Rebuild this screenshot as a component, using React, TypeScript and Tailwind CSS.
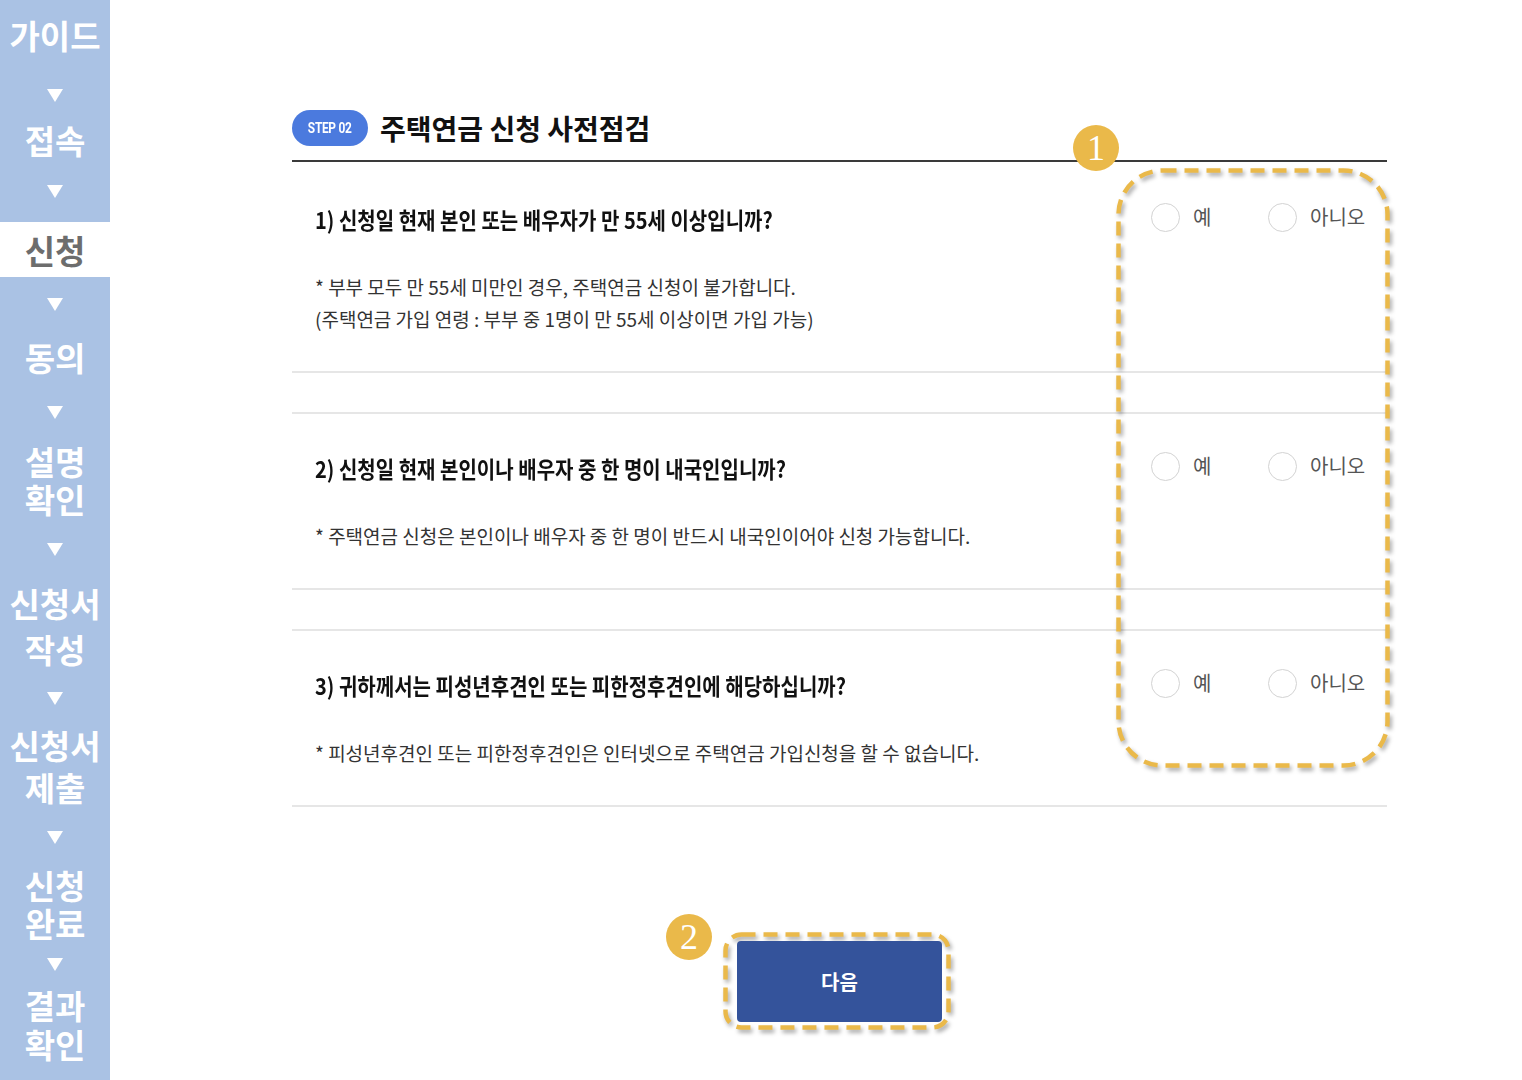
import React from 'react';

const kr = "font-['Noto_Sans_CJK_KR',sans-serif]";

const Arrow = ({ h }: { h: string }) => (
  <div className={`flex items-center justify-center ${h}`}>
    <svg width="16" height="13" viewBox="0 0 16 13">
      <path d="M0 0H16L8 13Z" fill="#ffffff" />
    </svg>
  </div>
);

const Label = ({ lines, h, lh, active }: { lines: string[]; h: string; lh: string; active?: boolean }) => (
  <div
    className={`flex flex-col items-center justify-center text-[33px] font-bold ${h} ${
      active ? 'bg-white text-[#6d6d6d]' : 'text-white'
    }`}
  >
    {lines.map((l) => (
      <span key={l} className={`block overflow-visible ${lh}`}>
        {l}
      </span>
    ))}
  </div>
);

const Sidebar = () => (
  <div className={`flex w-[110px] shrink-0 flex-col bg-[#aac2e4] ${kr}`}>
    <Label lines={['가이드']} h="h-[70px]" lh="h-[38px] leading-[38px]" />
    <Arrow h="h-[50px]" />
    <Label lines={['접속']} h="h-[40px]" lh="h-[38px] leading-[38px]" />
    <Arrow h="h-[62px]" />
    <Label lines={['신청']} h="h-[55px]" lh="h-[38px] leading-[38px]" active />
    <Arrow h="h-[55px]" />
    <Label lines={['동의']} h="h-[50px]" lh="h-[38px] leading-[38px]" />
    <Arrow h="h-[60px]" />
    <Label lines={['설명', '확인']} h="h-[76px]" lh="h-[38px] leading-[38px]" />
    <Arrow h="h-[62px]" />
    <Label lines={['신청서', '작성']} h="h-[92px]" lh="h-[46px] leading-[46px]" />
    <Arrow h="h-[52px]" />
    <Label lines={['신청서', '제출']} h="h-[84px]" lh="h-[42px] leading-[42px]" />
    <Arrow h="h-[58px]" />
    <Label lines={['신청', '완료']} h="h-[76px]" lh="h-[38px] leading-[38px]" />
    <Arrow h="h-[44px]" />
    <Label lines={['결과', '확인']} h="h-[78px]" lh="h-[39px] leading-[39px]" />
    <div className="h-[16px]" />
  </div>
);

const Radio = ({ label, w }: { label: string; w?: string }) => (
  <div className={`flex items-center ${w ?? ''}`}>
    <span className="h-[29px] w-[29px] rounded-full border-[1.5px] border-[#d3d3d3] bg-white" />
    <span className="ml-[13px] text-[20px] leading-[28px] text-[#555555]">{label}</span>
  </div>
);

type Item = { q: string; notes: string[]; pt: string; first?: boolean };

const items: Item[] = [
  {
    q: '1) 신청일 현재 본인 또는 배우자가 만 55세 이상입니까?',
    notes: ['* 부부 모두 만 55세 미만인 경우, 주택연금 신청이 불가합니다.', '(주택연금 가입 연령 : 부부 중 1명이 만 55세 이상이면 가입 가능)'],
    pt: 'pt-[43px]',
    first: true,
  },
  {
    q: '2) 신청일 현재 본인이나 배우자 중 한 명이 내국인입니까?',
    notes: ['* 주택연금 신청은 본인이나 배우자 중 한 명이 반드시 내국인이어야 신청 가능합니다.'],
    pt: 'pt-[40px]',
  },
  {
    q: '3) 귀하께서는 피성년후견인 또는 피한정후견인에 해당하십니까?',
    notes: ['* 피성년후견인 또는 피한정후견인은 인터넷으로 주택연금 가입신청을 할 수 없습니다.'],
    pt: 'pt-[40px]',
  },
];

const Badge = ({ n, className }: { n: string; className: string }) => (
  <div
    className={`absolute flex h-[46px] w-[46px] items-center justify-center rounded-full bg-[#eab94a] font-['Liberation_Serif',serif] text-[36px] leading-none text-white ${className}`}
  >
    {n}
  </div>
);

export default function App() {
  return (
    <div className={`flex min-h-[1080px] w-[1522px] bg-white ${kr}`}>
      <Sidebar />
      <div className="ml-[182px] w-[1095px] pt-[110px]">
        <div className="relative">
          {/* header */}
          <div className="flex h-[52px] items-start border-b-2 border-[#3a3a3a]">
            <div className="flex h-[36px] w-[76px] items-center justify-center rounded-full bg-[#4b7ade] font-['Roboto',sans-serif] text-[14px] font-bold tracking-tight text-white">
              <span className="origin-center scale-x-[0.85]">STEP 02</span>
            </div>
            <div className="ml-[12px] flex h-[36px] items-center text-[28px] font-bold text-[#111111]">
              주택연금 신청 사전점검
            </div>
          </div>

          {/* rows */}
          {items.map((it, i) => (
            <div
              key={i}
              className={`flex border-b-2 border-[#e6e6e6] pb-[36px] ${it.pt} ${it.first ? '' : 'mt-[39px] border-t-2'}`}
            >
              <div className="w-[859px] pl-[23px]">
                <div className="origin-left scale-x-[0.87] whitespace-nowrap text-[23px] font-bold leading-[28px] text-[#111111]">
                  {it.q}
                </div>
                <div className="mt-[38px] whitespace-nowrap text-[19px] leading-[32px] text-[#333333]">
                  {it.notes.map((n) => (
                    <div key={n}>{n}</div>
                  ))}
                </div>
              </div>
              <div className="-mt-[2px] flex h-[28px] items-center">
                <Radio label="예" w="w-[117px]" />
                <Radio label="아니오" />
              </div>
            </div>
          ))}

          {/* annotation 1 */}
          <svg
            className="absolute left-[824px] top-[58px] drop-shadow-[2px_3px_2px_rgba(0,0,0,0.35)]"
            width="276"
            height="602"
            viewBox="0 0 276 602"
          >
            <rect x="2.5" y="2.5" width="269" height="595" rx="44" fill="none" stroke="#eab94a" strokeWidth="4.5" strokeDasharray="14 8" />
          </svg>
          <Badge n="1" className="left-[781px] top-[15px]" />

          {/* next button */}
          <div className="mt-[134px] flex justify-center">
            <div className="relative">
              <svg
                className="absolute -left-[14px] -top-[9px] drop-shadow-[2px_3px_2px_rgba(0,0,0,0.35)]"
                width="229"
                height="100"
                viewBox="0 0 229 100"
              >
                <rect x="2.5" y="2.5" width="223" height="93" rx="16" fill="none" stroke="#eab94a" strokeWidth="4.5" strokeDasharray="14 8" />
              </svg>
              <button className="relative flex h-[81px] w-[205px] items-center justify-center rounded-[4px] bg-[#34539b] text-[20px] font-bold text-white">
                다음
              </button>
              <Badge n="2" className="-left-[71px] -top-[27px]" />
            </div>
          </div>
        </div>
      </div>
    </div>
  );
}
